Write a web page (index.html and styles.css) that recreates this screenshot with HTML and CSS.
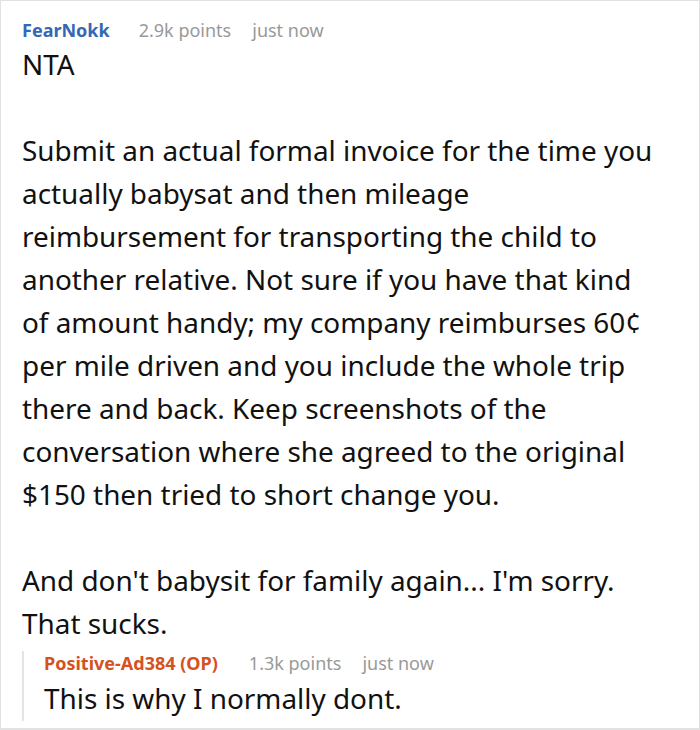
FILE: index.html
```html
<!DOCTYPE html>
<html>
<head>
<meta charset="utf-8">
<link rel="stylesheet" href="styles.css">
</head>
<body>
<div class="frame">
  <div class="comment">
    <div class="meta"><span class="author">FearNokk</span><span class="info">2.9k points</span><span class="info">just now</span></div>
    <div class="body">
      <p>NTA</p>
      <p>Submit an actual formal invoice for the time you actually babysat and then mileage reimbursement for transporting the child to another relative. Not sure if you have that kind of amount handy; my company reimburses 60¢ per mile driven and you include the whole trip there and back. Keep screenshots of the conversation where she agreed to the original $150 then tried to short change you.</p>
      <p>And don't babysit for family again... I'm sorry. That sucks.</p>
    </div>
    <div class="reply">
      <div class="meta"><span class="author op">Positive-Ad384 (OP)</span><span class="info">1.3k points</span><span class="info">just now</span></div>
      <div class="body"><p>This is why I normally dont.</p></div>
    </div>
  </div>
</div>
</body>
</html>
```
FILE: styles.css
```css
html, body { margin: 0; padding: 0; background: #fff; }
.frame {
  width: 700px;
  height: 730px;
  box-sizing: border-box;
  border: 1px solid #e2e2e2;
  border-bottom-width: 2px;
  overflow: hidden;
  font-family: "Noto Sans", "Open Sans", sans-serif;
  color: #111;
}
.comment { padding: 16px 34px 0 21px; }
.meta { font-size: 18px; line-height: 26px; display: flex; }
.author { font-weight: 700; color: #3568b3; margin-right: 29px; }
.author.op { color: #d5521e; margin-right: 31px; }
.info { color: #999; margin-right: 21px; }
.body { font-size: 27.9px; line-height: 43px; }
.body p { margin: 0 0 43px 0; }
.body p:last-child { margin-bottom: 0; }
.reply {
  margin-top: 17px;
  border-left: 2px solid #e4e4e4;
  padding-left: 20px;
}
.reply .meta { line-height: 24px; margin-top: -11px; }
.reply .body { line-height: 46px; margin-bottom: -9px; }
```
